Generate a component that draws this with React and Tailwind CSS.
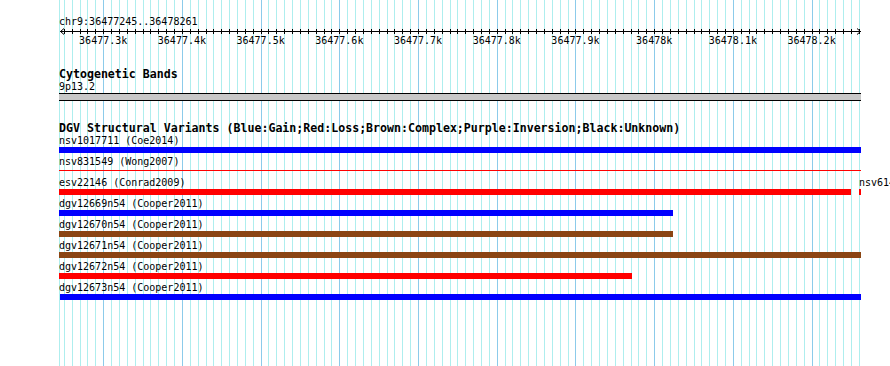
import React from 'react';

const VIEW_START = 36477245;
const VIEW_END = 36478261;
const PX_PER_BP = 0.7871;
const TRACK_LEFT = 59;
const TRACK_WIDTH = 802;

// page x of a base position (major 36477.3k line sits at x=103)
const bpToX = (bp) => 103.2 + (bp - 36477300) * PX_PER_BP;

const ticks = [];
for (let bp = 36477250; bp <= 36478260; bp += 10) ticks.push(bp);
const majors = ticks.filter((bp) => bp % 100 === 0);

const fmtK = (bp) => `${(bp / 1000).toFixed(1).replace(/\.0$/, '')}k`;

const COLORS = {
  gain: 'bg-[#0000ff]',
  loss: 'bg-[#ff0000]',
  complex: 'bg-[#8b4513]',
};

// start/end are pixel offsets inside the track (track left = 59)
const variants = [
  { label: 'nsv1017711 (Coe2014)', bars: [{ start: 0, end: 802, type: 'gain' }] },
  { label: 'nsv831549 (Wong2007)', thin: true, bars: [{ start: 0, end: 802, type: 'loss' }] },
  {
    label: 'esv22146 (Conrad2009)',
    bars: [
      { start: 0, end: 792, type: 'loss' },
      { start: 800, end: 802, type: 'loss' },
    ],
    extra: { at: 800, label: 'nsv614101 (Conrad2009)' },
  },
  { label: 'dgv12669n54 (Cooper2011)', bars: [{ start: 0, end: 614, type: 'gain' }] },
  { label: 'dgv12670n54 (Cooper2011)', bars: [{ start: 0, end: 614, type: 'complex' }] },
  { label: 'dgv12671n54 (Cooper2011)', bars: [{ start: 0, end: 802, type: 'complex' }] },
  { label: 'dgv12672n54 (Cooper2011)', bars: [{ start: 0, end: 573, type: 'loss' }] },
  { label: 'dgv12673n54 (Cooper2011)', bars: [{ start: 1, end: 802, type: 'gain' }] },
];

function Gridlines() {
  return (
    <svg className="absolute left-0 top-0" width="890" height="366" shapeRendering="crispEdges">
      <line x1="59.5" x2="59.5" y1="0" y2="366" stroke="#aeeeee" />
      {ticks.map((bp) => {
        const x = Math.round(bpToX(bp)) + 0.5;
        const major = bp % 100 === 0;
        return (
          <line
            key={bp}
            x1={x}
            x2={x}
            y1="0"
            y2="366"
            stroke={major ? '#8ccbea' : '#aeeeee'}
            strokeWidth="1"
          />
        );
      })}
    </svg>
  );
}

function Ruler() {
  const w = TRACK_WIDTH + 1;
  return (
    <div className="pt-[17px]">
      <div className="h-[11px] leading-[9px] text-[10px]">
        chr9:{VIEW_START}..{VIEW_END}
      </div>
      <svg width={w} height="8" className="block" shapeRendering="crispEdges">
        <line x1="1" x2={w - 1} y1="3.5" y2="3.5" stroke="#000" />
        <path d={`M5 0.5 L1.5 3.5 L5 6.5`} fill="none" stroke="#000" shapeRendering="auto" />
        <path d={`M${w - 5} 0.5 L${w - 1.5} 3.5 L${w - 5} 6.5`} fill="none" stroke="#000" shapeRendering="auto" />
        {ticks.map((bp) => {
          const x = Math.round(bpToX(bp)) - TRACK_LEFT + 0.5;
          return <line key={bp} x1={x} x2={x} y1="1" y2="6" stroke="#000" />;
        })}
      </svg>
      <div className="relative h-[11px] leading-[9px] text-[10px]">
        {majors.map((bp) => (
          <span
            key={bp}
            className="absolute top-0 -translate-x-1/2 whitespace-nowrap"
            style={{ left: bpToX(bp) - TRACK_LEFT }}
          >
            {fmtK(bp)}
          </span>
        ))}
      </div>
    </div>
  );
}

function TrackTitle({ children }) {
  return (
    <div className="h-[14px] leading-[12px] text-[11.6px] font-bold whitespace-nowrap">{children}</div>
  );
}

function FeatureRow({ label, bars, thin, extra }) {
  return (
    <div className="h-[21px]">
      <div className="relative h-[11px] leading-[9px] text-[10px] whitespace-nowrap">
        {label}
        {extra && (
          <span className="absolute top-0" style={{ left: extra.at }}>
            {extra.label}
          </span>
        )}
      </div>
      <div className="flex h-[6px]">
        {bars.map((b, i) => {
          const prevEnd = i === 0 ? 0 : bars[i - 1].end;
          return (
            <div
              key={i}
              className={thin ? `mt-[2px] h-px ${COLORS[b.type]}` : `h-[6px] ${COLORS[b.type]}`}
              style={{ marginLeft: b.start - prevEnd, width: b.end - b.start }}
            />
          );
        })}
      </div>
    </div>
  );
}

export default function App() {
  return (
    <div className="relative h-[366px] w-[890px] overflow-hidden bg-white font-['DejaVu_Sans_Mono',monospace] text-black">
      <Gridlines />
      <div className="relative ml-[59px] w-[802px]">
        <Ruler />

        <div className="mt-[21px]">
          <TrackTitle>Cytogenetic Bands</TrackTitle>
          <div className="h-[11px] leading-[9px] text-[10px]">9p13.2</div>
          <div className="h-[8px] border-y border-black bg-[#c8c8c8]" />
        </div>

        <div className="mt-[21px]">
          <TrackTitle>
            DGV Structural Variants (Blue:Gain;Red:Loss;Brown:Complex;Purple:Inversion;Black:Unknown)
          </TrackTitle>
          {variants.map((v) => (
            <FeatureRow key={v.label} {...v} />
          ))}
        </div>
      </div>
    </div>
  );
}
